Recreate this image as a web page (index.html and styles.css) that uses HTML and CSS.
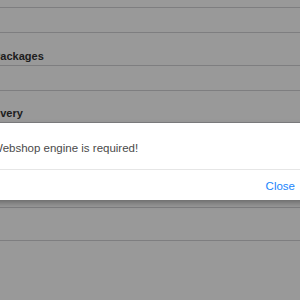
FILE: index.html
```html
<!DOCTYPE html>
<html lang="en">
<head>
  <meta charset="UTF-8" />
  <meta name="viewport" content="width=device-width, initial-scale=1.0" />
  <title>Webshop settings</title>
  <link rel="stylesheet" href="styles.css">
</head>
<body>
  <div class="settings">
    <div class="row"></div>
    <div class="row"></div>
    <div class="section-title section-title--packages">Packages</div>
    <div class="row"></div>
    <div class="section-title section-title--delivery">Delivery</div>
    <div class="row row--tall"></div>
    <div class="section-title"></div>
    <div class="row row--last"></div>
  </div>

  <div class="overlay"></div>

  <div class="alert">
    <div class="alert-message">Webshop engine is required!</div>
    <div class="alert-actions">
      <button type="button" class="alert-button">Close</button>
    </div>
  </div>
</body>
</html>
```

FILE: styles.css
```css
body {
  margin: 0;
  width: 300px;
  height: 300px;
  overflow: hidden;
  position: relative;
  background: #fff;
  font-family: 'Liberation Sans', Arial, sans-serif;
  color: #333;
}
.settings {
  margin-top: -17px;
}
.row {
  height: 25px;
  box-sizing: border-box;
  border-bottom: 1px solid #d3d3d6;
}
.row--tall {
  height: 85px;
}
.row--last {
  height: 90px;
}
.section-title {
  height: 33px;
  box-sizing: border-box;
  border-bottom: 1px solid #d3d3d6;
  display: flex;
  align-items: flex-end;
  padding-bottom: 3px;
  font-size: 11px;
  font-weight: bold;
  color: #333;
  white-space: nowrap;
}
.section-title--packages {
  margin-left: -7px;
}
.section-title--delivery {
  height: 32px;
  margin-left: -20px;
}
.overlay {
  position: absolute;
  inset: 0;
  background: rgba(0, 0, 0, 0.4);
}
.alert {
  position: absolute;
  top: 123px;
  left: -20px;
  right: -7px;
  background: #fff;
  box-shadow: 0 3px 6px rgba(0, 0, 0, 0.3);
}
.alert-message {
  height: 47px;
  box-sizing: border-box;
  padding: 19px 12px 0;
  font-size: 11.5px;
  color: #4a4a4a;
  border-bottom: 1px solid #e6e6e6;
}
.alert-actions {
  height: 30px;
  display: flex;
  justify-content: flex-end;
  align-items: center;
  padding: 0 12px;
}
.alert-button {
  padding: 0;
  margin-top: 2px;
  border: none;
  background: none;
  font-family: inherit;
  font-size: 11.5px;
  color: #1a84fb;
  cursor: pointer;
}
```
